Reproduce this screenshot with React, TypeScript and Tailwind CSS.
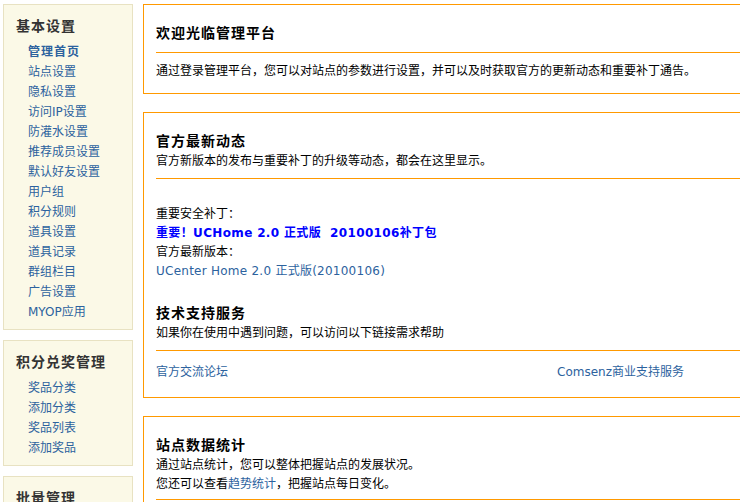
import React from 'react';

const FONT = "font-['DejaVu_Sans','Noto_Sans_CJK_SC',sans-serif]";

function SideBlock({ title, items, first }: { title: string; items: string[]; first?: boolean }) {
  return (
    <div className="border border-[#e8e2c2] bg-[#fbf9e7] pt-[9px] pb-[7px]">
      <h3 className="pl-[12px] h-[24px] leading-[24px] text-[14px] font-bold tracking-[1px] text-[#333]">{title}</h3>
      <ul className="mt-[4px] pl-[24px]">
        {items.map((it, i) => (
          <li key={it} className="h-[20px] leading-[20px]">
            <a className={`text-[#2c629e] ${first && i === 0 ? 'font-bold tracking-[1px]' : ''}`}>{it}</a>
          </li>
        ))}
      </ul>
    </div>
  );
}

export default function App() {
  const basic = ['管理首页', '站点设置', '隐私设置', '访问IP设置', '防灌水设置', '推荐成员设置', '默认好友设置', '用户组', '积分规则', '道具设置', '道具记录', '群组栏目', '广告设置', 'MYOP应用'];
  const prize = ['奖品分类', '添加分类', '奖品列表', '添加奖品'];
  const batch = ['批量用户', '批量日志'];
  return (
    <div className={`w-[740px] h-[502px] overflow-hidden bg-white text-black text-[12px] ${FONT}`}>
      <div className="flex items-start pt-[4px] pl-[3px] gap-[10px]">
        <div className="w-[130px] shrink-0 flex flex-col gap-[10px]">
          <SideBlock title="基本设置" items={basic} first />
          <SideBlock title="积分兑奖管理" items={prize} />
          <SideBlock title="批量管理" items={batch} />
        </div>
        <div className="w-[820px] shrink-0 flex flex-col gap-[18px]">
          {/* box 1 */}
          <div className="border border-[#ff9900] pl-[12px] pb-[12px]">
            <div className="pt-[18px] pb-[9px] border-b border-[#ff9900]">
              <h3 className="h-[20px] leading-[20px] text-[14px] font-bold tracking-[1px]">欢迎光临管理平台</h3>
            </div>
            <p className="mt-[8px] h-[20px] leading-[20px]">
              通过登录管理平台，您可以对站点的参数进行设置，并可以及时获取官方的更新动态和重要补丁通告。
            </p>
          </div>
          {/* box 2 */}
          <div className="border border-[#ff9900] pl-[12px] pb-[15px]">
            <div className="pt-[18px] pb-[7px] border-b border-[#ff9900]">
              <h3 className="h-[20px] leading-[20px] text-[14px] font-bold tracking-[1px]">官方最新动态</h3>
              <p className="h-[20px] leading-[20px]">官方新版本的发布与重要补丁的升级等动态，都会在这里显示。</p>
            </div>
            <div className="mt-[26px] leading-[19px]">
              <div className="h-[19px]">重要安全补丁：</div>
              <div className="h-[19px]">
                <a className="text-[#0000ff] font-bold whitespace-pre tracking-[0.35px]">{'重要！UCHome 2.0 正式版  20100106补丁包'}</a>
              </div>
              <div className="h-[19px]">官方最新版本：</div>
              <div className="h-[19px]">
                <a className="text-[#2c629e] tracking-[0.25px]">UCenter Home 2.0 正式版(20100106)</a>
              </div>
            </div>
            <div className="mt-[22px] pb-[7px] border-b border-[#ff9900]">
              <h3 className="h-[20px] leading-[20px] text-[14px] font-bold tracking-[1px]">技术支持服务</h3>
              <p className="h-[20px] leading-[20px]">如果你在使用中遇到问题，可以访问以下链接需求帮助</p>
            </div>
            <div className="mt-[11px] grid grid-cols-[401px_1fr] h-[20px] leading-[20px]">
              <a className="text-[#2c629e]">官方交流论坛</a>
              <a className="text-[#2c629e]">Comsenz商业支持服务</a>
            </div>
          </div>
          {/* box 3 */}
          <div className="border border-[#ff9900] pl-[12px] pb-[12px]">
            <div className="pt-[18px] pb-[5px] border-b border-[#ff9900]">
              <h3 className="h-[20px] leading-[20px] text-[14px] font-bold tracking-[1px]">站点数据统计</h3>
              <p className="h-[20px] leading-[20px]">通过站点统计，您可以整体把握站点的发展状况。</p>
              <p className="h-[19px] leading-[19px]">
                您还可以查看<a className="text-[#2c629e]">趋势统计</a>，把握站点每日变化。
              </p>
            </div>
            <div className="h-[60px]" />
          </div>
        </div>
      </div>
    </div>
  );
}
